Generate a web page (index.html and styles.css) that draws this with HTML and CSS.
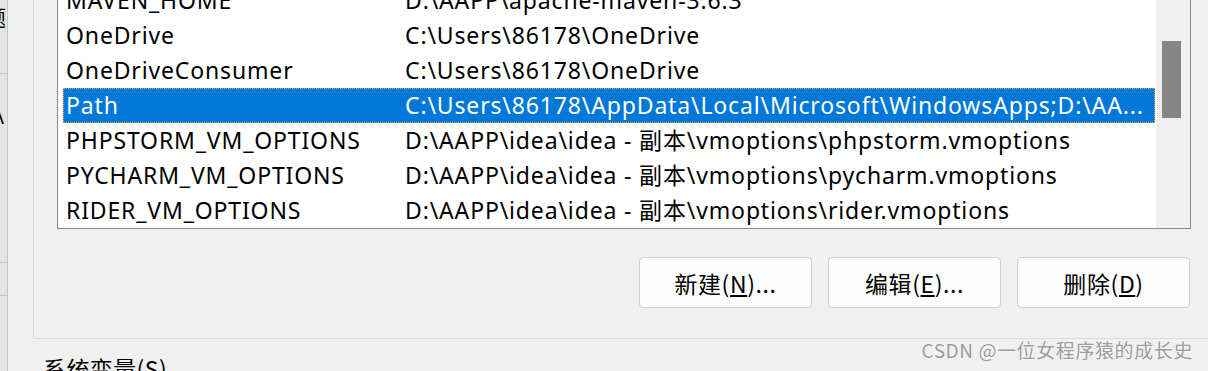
FILE: index.html
```html
<!DOCTYPE html>
<html lang="zh-CN">
<head>
    <meta charset="UTF-8">
    <title>环境变量</title>
    <link rel="stylesheet" href="styles.css">
</head>
<body>
    <div class="window">
        <div class="side-strip">
            <span class="side-glyph top">题</span>
            <span class="side-glyph mid">\</span>
            <div class="side-line l1"></div>
            <div class="side-line l2"></div>
            <div class="side-line l3"></div>
        </div>

        <div class="main">
            <div class="group">
                <div class="var-list">
                    <div class="rows">
                        <div class="row"><span class="name">MAVEN_HOME</span><span class="value">D:\AAPP\apache-maven-3.6.3</span></div>
                        <div class="row"><span class="name">OneDrive</span><span class="value">C:\Users\86178\OneDrive</span></div>
                        <div class="row"><span class="name">OneDriveConsumer</span><span class="value">C:\Users\86178\OneDrive</span></div>
                        <div class="row selected"><span class="name">Path</span><span class="value">C:\Users\86178\AppData\Local\Microsoft\WindowsApps;D:\AA...</span></div>
                        <div class="row"><span class="name">PHPSTORM_VM_OPTIONS</span><span class="value">D:\AAPP\idea\idea - 副本\vmoptions\phpstorm.vmoptions</span></div>
                        <div class="row"><span class="name">PYCHARM_VM_OPTIONS</span><span class="value">D:\AAPP\idea\idea - 副本\vmoptions\pycharm.vmoptions</span></div>
                        <div class="row"><span class="name">RIDER_VM_OPTIONS</span><span class="value">D:\AAPP\idea\idea - 副本\vmoptions\rider.vmoptions</span></div>
                    </div>
                    <div class="scrollbar">
                        <div class="thumb"></div>
                    </div>
                </div>

                <div class="actions">
                    <button class="btn">新建(<u>N</u>)...</button>
                    <button class="btn">编辑(<u>E</u>)...</button>
                    <button class="btn">删除(<u>D</u>)</button>
                </div>
            </div>

            <div class="section-label">系统变量(<u>S</u>)</div>
        </div>
    </div>

    <div class="watermark">CSDN @一位女程序猿的成长史</div>
</body>
</html>
```

FILE: styles.css
```css
body {
    margin: 0;
    width: 1208px;
    height: 371px;
    overflow: hidden;
    background: #f0f0f0;
    font-family: "Noto Sans", "Noto Sans CJK SC", sans-serif;
    font-size: 23px;
    letter-spacing: 0.85px;
    color: #000;
}
.window {
    display: flex;
    height: 371px;
}
.side-strip {
    position: relative;
    width: 7px;
    flex: none;
    background: #e4e4e4;
    border-right: 1px solid #c6c6c6;
    overflow: hidden;
}
.side-glyph {
    position: absolute;
    font-size: 22px;
    line-height: 22px;
}
.side-glyph.top { top: 6px; left: -16px; }
.side-glyph.mid { top: 104px; left: -4px; }
.side-line {
    position: absolute;
    left: 0;
    right: 0;
    height: 1px;
    background: #c6c6c6;
}
.side-line.l1 { top: 73px; }
.side-line.l2 { top: 262px; }
.side-line.l3 { top: 295px; }

.main {
    flex: 1;
    padding-left: 25px;
}
.group {
    margin-top: -17px;
    height: 355px;
    border-left: 1px solid #dcdcdc;
    border-bottom: 1px solid #dcdcdc;
    padding-left: 23px;
    padding-right: 17px;
}
.var-list {
    display: flex;
    background: #fff;
    border: 1px solid #828790;
    border-top: none;
}
.rows {
    flex: 1;
    padding-left: 5px;
}
.row {
    display: flex;
    height: 35px;
    line-height: 35px;
    padding-left: 3px;
    white-space: nowrap;
    box-sizing: border-box;
}
.row .name {
    width: 339px;
    flex: none;
}
.row.selected {
    background: #0078d7;
    color: #fff;
    outline: 1px dotted #f0a030;
    outline-offset: -1px;
}
.scrollbar {
    width: 34px;
    flex: none;
    background: #f0f0f0;
    border-left: 1px solid #fff;
}
.thumb {
    width: 19px;
    height: 77px;
    margin: 58px 0 0 6px;
    background: #858585;
}

.actions {
    display: flex;
    justify-content: flex-end;
    gap: 16px;
    margin-top: 28px;
    padding-right: 1px;
}
.btn {
    width: 173px;
    height: 51px;
    background: #fdfdfd;
    border: 1px solid #d0d0d0;
    border-radius: 4px;
    font-family: "Noto Sans CJK SC", "Noto Sans", sans-serif;
    font-size: 23px;
    letter-spacing: 0.6px;
    color: #000;
    padding: 0;
}

.section-label {
    margin: 14px 0 0 10px;
    font-family: "Noto Sans CJK SC", sans-serif;
    letter-spacing: 0.4px;
    line-height: 30px;
}

.watermark {
    position: absolute;
    right: 15px;
    top: 336px;
    font-family: "Noto Sans CJK SC", "Noto Sans", sans-serif;
    font-size: 19px;
    letter-spacing: 0.6px;
    color: #9c9c9c;
    text-shadow: 0 0 2px #fff;
}
```
